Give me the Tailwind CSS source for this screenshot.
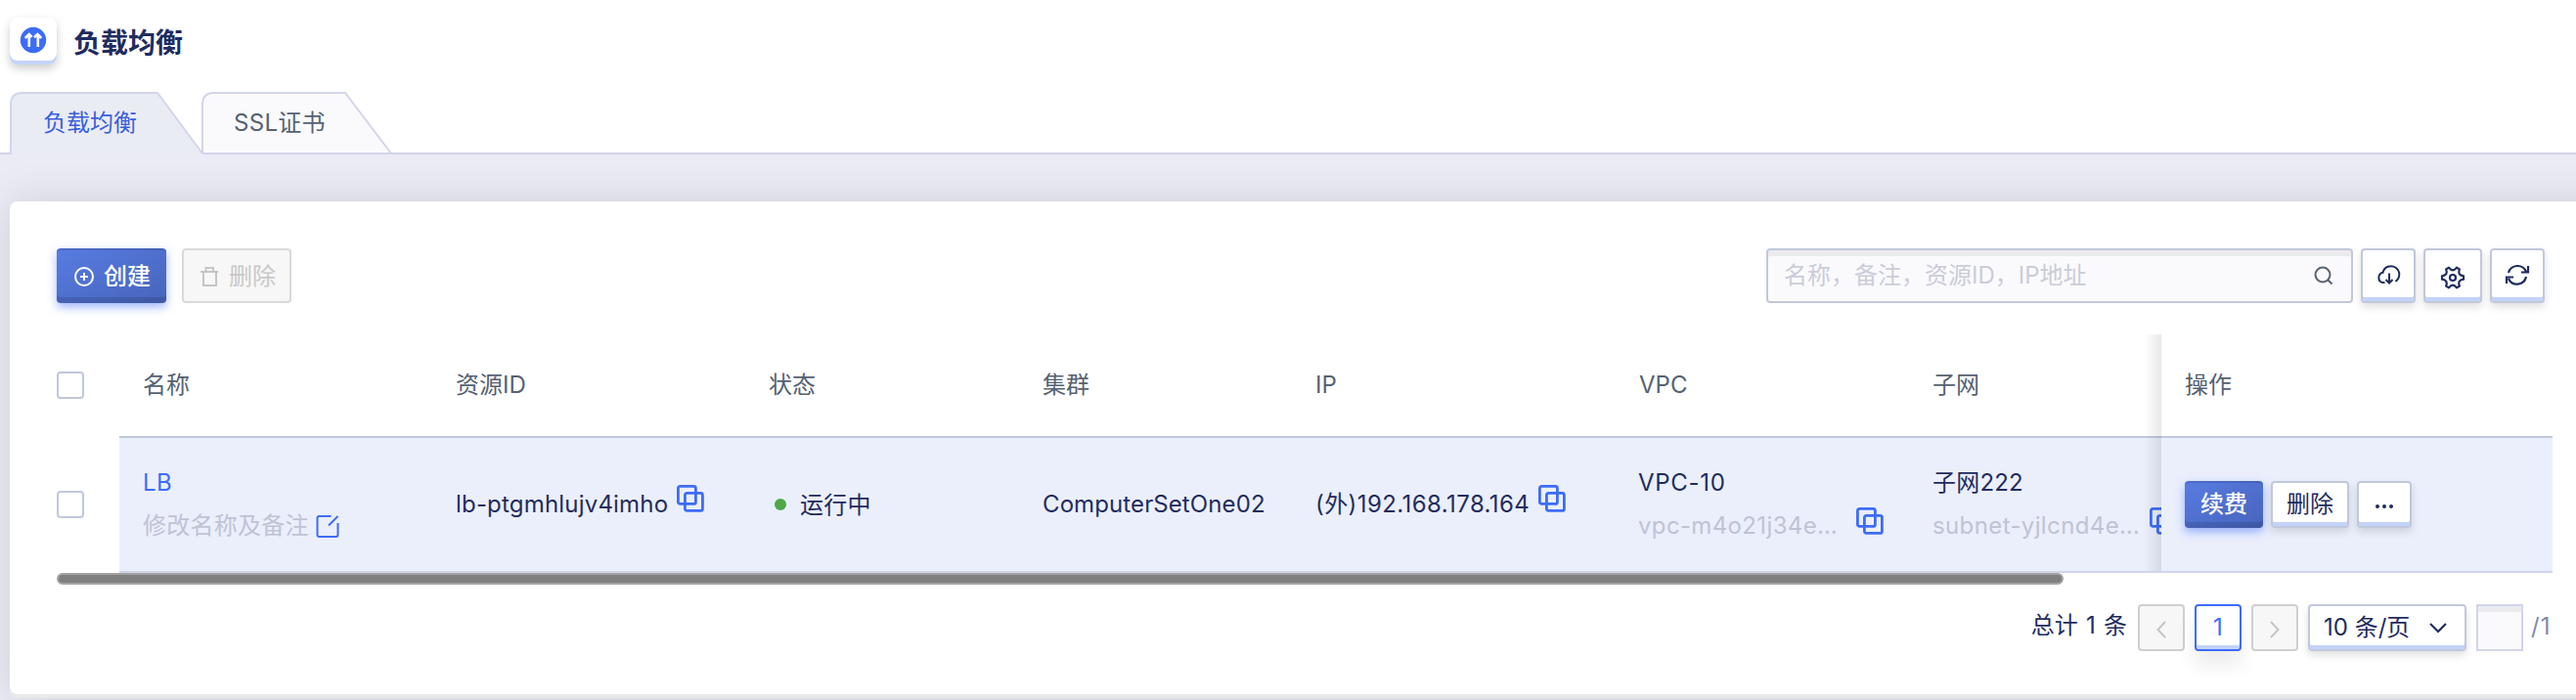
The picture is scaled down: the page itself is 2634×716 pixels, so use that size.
<!DOCTYPE html>
<html lang="zh-CN">
<head>
<meta charset="utf-8">
<title>负载均衡</title>
<script src="https://cdn.jsdelivr.net/npm/@tailwindcss/browser@4"></script>
</head>
<body class="w-[2634px] h-[716px] overflow-hidden bg-[#eaebf4] font-['Inter','Noto_Sans_CJK_SC',sans-serif] text-[24px] leading-[36px] text-[#1f2c5f]">
<svg class="hidden">
  <symbol id="copy" viewBox="0 0 28 28"><g fill="none" stroke="#3d6cf9" stroke-width="2.8"><rect x="1.4" y="1.4" width="18" height="18" rx="2"/><rect x="8.4" y="8.4" width="18" height="18" rx="2"/></g></symbol>
</svg>

<header class="h-[158px] bg-white flex flex-col">
  <div class="h-[94px] pl-[10px] flex">
    <div class="mt-[18px] w-[48px] h-[48px] rounded-[8px] bg-white flex justify-center pt-[9px] shadow-[inset_0_-4px_0_#c3d3f8,0_4px_10px_rgba(0,0,0,0.2)]">
      <svg class="size-[28px]" viewBox="0 0 28 28"><circle cx="14" cy="14" r="13.2" fill="#3d6cf9"/><path d="M9.8 21V9M5.800 12L9.800 8L12.6 10.8M18.8 21V9M15 11.2L18.4 8L22.2 12" fill="none" stroke="#fff" stroke-width="2.6"/></svg>
    </div>
    <h1 class="ml-[17px] mt-[23px] text-[28px] leading-[42px] font-bold">负载均衡</h1>
  </div>
  <nav class="relative flex h-[64px]">
    <svg class="absolute left-0 top-[-2px] w-[2634px] h-[66px]" viewBox="0 0 2634 66">
      <path d="M11 66V15Q11 3 23 3H161L208 66Z" fill="#eaecf4"/>
      <path d="M207 65V15Q207 3 219 3H353L400 65Z" fill="#fafafd"/>
      <path d="M0 65H11V15Q11 3 23 3H161L207 65M207 65V15Q207 3 219 3H353L400 65M207 65H2634" fill="none" stroke="#d2d5e9" stroke-width="2"/>
    </svg>
    <a class="relative ml-[44px] mt-[14px] w-[195px] text-[#3a5fdb]">负载均衡</a>
    <a class="relative mt-[14px] text-[#566273] tracking-[0.3px]">SSL证书</a>
  </nav>
</header>

<main class="mt-[48px] ml-[10px] h-[508px] w-[2700px] rounded-[8px] bg-white shadow-[inset_0_-4px_0_#e9e9e9,0_0_44px_rgba(0,0,0,0.12)] flex flex-col">
  <div class="pl-[48px] pt-[48px] h-[136px] flex w-[2600px] pr-[8px]">
    <button class="w-[112px] h-[56px] rounded-[4px] bg-linear-to-br from-[#587ce2] to-[#4764bb] shadow-[inset_0_2px_0_rgba(0,0,0,0.12),inset_0_-6px_0_rgba(0,0,0,0.12),0_4px_10px_rgba(61,108,249,0.5)] text-white font-medium flex items-center pl-[17px] pt-[2px] gap-[9px]">
      <svg class="size-[22px]" viewBox="0 0 22 22" fill="none" stroke="#fff" stroke-width="2"><circle cx="11" cy="11" r="9"/><path d="M11 7V15M7 11H15"/></svg>
      <span>创建</span>
    </button>
    <button class="ml-[16px] w-[112px] h-[56px] rounded-[4px] bg-[#f7f7f7] border-2 border-[#d9d9d9] text-[#c8c8c8] flex items-center pl-[16px] pt-[2px] gap-[10px]">
      <svg class="size-[20px]" viewBox="0 0 20 20" fill="none" stroke="#c5c5c5" stroke-width="2"><path d="M1 5H19M4 5V19H17V5M6.500 5V1H14V5"/></svg>
      <span>删除</span>
    </button>
    <div class="ml-auto w-[600px] h-[56px] rounded-[4px] border-2 border-[#c1c8dc] bg-[#fafafd] shadow-[inset_0_6px_0_#ebebee] flex items-center pl-[16px] pr-[18px] text-[#cbccd8]">
      <span class="flex-1 whitespace-nowrap">名称，备注，资源ID，IP地址</span>
      <svg class="size-[20px]" viewBox="0 0 20 20" fill="none" stroke="#5a6472" stroke-width="2"><circle cx="9" cy="9" r="7.500"/><path d="M14 14L18.500 18.500"/></svg>
    </div>
    <button class="ml-[8px] w-[56px] h-[56px] rounded-[4px] border-2 border-[#c1c8dc] bg-white shadow-[inset_0_-4px_0_#c3d3f8,0_4px_8px_rgba(0,0,0,0.13)] flex justify-center pt-[13px]">
      <svg class="size-[26px]" viewBox="0 0 26 26" fill="none" stroke="#1f2c5f" stroke-width="2"><path d="M9.500 20H7A5.300 5.300 0 0 1 7.500 9.800A8.500 8.500 0 1 1 20.500 18.800M14 10.500V20M10.500 17L14 20.500L17.500 17"/></svg>
    </button>
    <button class="ml-[8px] w-[60px] h-[56px] rounded-[4px] border-2 border-[#c1c8dc] bg-white shadow-[inset_0_-4px_0_#c3d3f8,0_4px_8px_rgba(0,0,0,0.13)] flex justify-center pt-[15px]">
      <svg class="size-[26px]" viewBox="0 0 26 26" fill="none" stroke="#1f2c5f" stroke-width="2.200" stroke-linejoin="round"><circle cx="13" cy="13" r="3"/><path d="M24 11.300V14.700Q17.400 15.500 19.900 21.600L17 23.300Q13 18 9 23.300L6.100 21.600Q8.600 15.500 2 14.700V11.300Q8.600 10.500 6.100 4.400L9 2.700Q13 8 17 2.700L19.900 4.400Q17.400 10.500 24 11.300Z"/></svg>
    </button>
    <button class="ml-[8px] w-[56px] h-[56px] rounded-[4px] border-2 border-[#c1c8dc] bg-white shadow-[inset_0_-4px_0_#c3d3f8,0_4px_8px_rgba(0,0,0,0.13)] flex justify-center pt-[12px]">
      <svg class="size-[26px]" viewBox="0 0 26 26" fill="none" stroke="#1f2c5f" stroke-width="2.200"><path d="M4 11A9.500 9.500 0 0 1 22 10M17 10.500H24V4M22 15A9.500 9.500 0 0 1 4 17M9 15.500H2V22"/></svg>
    </button>
  </div>

  <section class="relative ml-[48px] w-[2552px] h-[256px] overflow-hidden">
    <div class="h-[106px] flex text-[#566273]">
      <div class="w-[64px] pt-[38px]"><div class="size-[28px] rounded-[4px] border-2 border-[#c1c8dc] bg-white"></div></div>
      <div class="w-[2488px] border-b-2 border-[#c1c8dc] flex items-center whitespace-nowrap">
        <div class="w-[320px] shrink-0 pl-[24px]">名称</div>
        <div class="w-[320px] shrink-0 pl-[24px]">资源ID</div>
        <div class="w-[280px] shrink-0 pl-[24px]">状态</div>
        <div class="w-[280px] shrink-0 pl-[24px]">集群</div>
        <div class="w-[330px] shrink-0 pl-[23px]">IP</div>
        <div class="w-[300px] shrink-0 pl-[24px]">VPC</div>
        <div class="w-[258px] shrink-0 pl-[24px]">子网</div>
        <div class="w-[400px] shrink-0 pl-[24px]">操作</div>
      </div>
    </div>
    <div class="h-[138px] flex">
      <div class="w-[64px] pt-[54px]"><div class="size-[28px] rounded-[4px] border-2 border-[#c1c8dc] bg-white"></div></div>
      <div class="w-[2488px] border-b-2 border-[#d2d5e9] bg-[#ebeffc] flex items-center whitespace-nowrap">
        <div class="w-[320px] shrink-0 pl-[24px]">
          <div class="h-[44px] flex items-center text-[#3d6cf9] tracking-[0.5px]">LB</div>
          <div class="h-[44px] flex items-center text-[#bfc3d4]"><span class="tracking-[0.25px]">修改名称及备注</span><svg class="ml-[7px] mb-[1px] size-[24px]" viewBox="0 0 24 24" fill="none" stroke="#3d6cf9" stroke-width="2"><path d="M15.500 2H3.500Q1.500 2 1.500 4V21Q1.500 23 3.500 23H20.500Q22.500 23 22.500 21V9M13 11.500L22.500 2"/></svg></div>
        </div>
        <div class="w-[320px] shrink-0 pl-[24px] flex items-center"><span class="w-[226px] tracking-[0.19px]">lb-ptgmhlujv4imho</span><svg class="mb-[12px] size-[28px]"><use href="#copy"/></svg></div>
        <div class="w-[280px] shrink-0 pl-[30px] flex items-center"><i class="size-[12px] rounded-full bg-[#4fa845] mr-[14px]"></i><span class="tracking-[0.2px] pt-[1px]">运行中</span></div>
        <div class="w-[280px] shrink-0 pl-[24px] tracking-[0.1px]">ComputerSetOne02</div>
        <div class="w-[330px] shrink-0 pl-[23px] flex items-center"><span class="w-[228px] tracking-[0.42px]">(外)192.168.178.164</span><svg class="mb-[12px] size-[28px]"><use href="#copy"/></svg></div>
        <div class="w-[300px] shrink-0 pl-[23px]">
          <div class="h-[44px] flex items-center tracking-[0.7px]">VPC-10</div>
          <div class="h-[44px] flex items-center text-[#bfc3d4]"><span class="w-[223px] tracking-[0.36px]">vpc-m4o21j34e…</span><svg class="mb-[11px] size-[28px]"><use href="#copy"/></svg></div>
        </div>
        <div class="w-[258px] h-[136px] shrink-0 pl-[24px] overflow-hidden flex flex-col justify-center">
          <div class="h-[44px] flex items-center tracking-[0.2px]">子网222</div>
          <div class="h-[44px] flex items-center text-[#bfc3d4]"><span class="w-[222px] shrink-0 tracking-[0.38px]">subnet-yjlcnd4e…</span><svg class="mb-[11px] size-[28px] shrink-0"><use href="#copy"/></svg></div>
        </div>
        <div class="w-[400px] shrink-0 pl-[24px] flex gap-[8px]">
          <button class="w-[80px] h-[48px] rounded-[4px] bg-linear-to-br from-[#587ce2] to-[#4764bb] shadow-[inset_0_2px_0_rgba(0,0,0,0.12),inset_0_-6px_0_rgba(0,0,0,0.12),0_4px_10px_rgba(61,108,249,0.5)] text-white font-medium flex items-center justify-center">续费</button>
          <button class="w-[80px] h-[48px] rounded-[4px] border-2 border-[#c1c8dc] bg-white shadow-[inset_0_-4px_0_#c3d3f8,0_4px_8px_rgba(0,0,0,0.13)] flex items-center justify-center">删除</button>
          <button class="w-[56px] h-[48px] rounded-[4px] border-2 border-[#c1c8dc] bg-white shadow-[inset_0_-4px_0_#c3d3f8,0_4px_8px_rgba(0,0,0,0.13)] flex items-center justify-center gap-[3px] pt-[3px]"><i class="size-[4px] rounded-full bg-[#1f2c5f]"></i><i class="size-[4px] rounded-full bg-[#1f2c5f]"></i><i class="size-[4px] rounded-full bg-[#1f2c5f]"></i></button>
        </div>
      </div>
    </div>
    <div class="h-[12px] w-[2052px] rounded-full bg-[#7f7f7f] border-2 border-[#a3a3a3]"></div>
    <div class="absolute left-[2134px] top-0 w-[18px] h-[242px] bg-linear-to-r from-black/0 to-black/9"></div>
  </section>

  <footer class="w-[2600px] pt-[20px] flex justify-end whitespace-nowrap">
    <span class="mt-[4px] mr-[11px] [word-spacing:1.5px]">总计 1 条</span>
    <button class="w-[48px] h-[48px] rounded-[4px] bg-[#f7f7f7] border-2 border-[#cfcfcf] mr-[10px] flex items-center justify-center"><svg class="mt-[4px] w-[10px] h-[18px]" viewBox="0 0 10 18" fill="none" stroke="#c5c5c5" stroke-width="2"><path d="M9 1L1.500 9L9 17"/></svg></button>
    <button class="w-[48px] h-[48px] rounded-[4px] bg-white border-2 border-[#3d6cf9] text-[#3d6cf9] mr-[10px] shadow-[inset_0_-4px_0_#c3d3f8,0_14px_20px_rgba(0,0,0,0.08)] flex items-center justify-center">1</button>
    <button class="w-[48px] h-[48px] rounded-[4px] bg-[#f7f7f7] border-2 border-[#cfcfcf] mr-[10px] flex items-center justify-center"><svg class="mt-[4px] w-[10px] h-[18px]" viewBox="0 0 10 18" fill="none" stroke="#c5c5c5" stroke-width="2"><path d="M1 1L8.500 9L1 17"/></svg></button>
    <div class="w-[162px] h-[48px] rounded-[4px] border-2 border-[#c1c8dc] bg-white shadow-[inset_0_-4px_0_#c3d3f8,0_4px_8px_rgba(0,0,0,0.13)] mr-[10px] flex items-center pl-[14px] pr-[18px] justify-between">10 条/页<svg class="w-[18px] h-[12px]" viewBox="0 0 18 12" fill="none" stroke="#1f2c5f" stroke-width="2.200"><path d="M1 2L9 10L17 2"/></svg></div>
    <div class="w-[48px] h-[48px] border-2 border-[#d2d5e9] bg-[#fafafd] shadow-[inset_0_6px_0_#ebebee] mr-[8px]"></div>
    <span class="mt-[5px] w-[22px] tracking-[1px] text-[#7f8aa9]">/1</span>
  </footer>
</main>
</body>
</html>
